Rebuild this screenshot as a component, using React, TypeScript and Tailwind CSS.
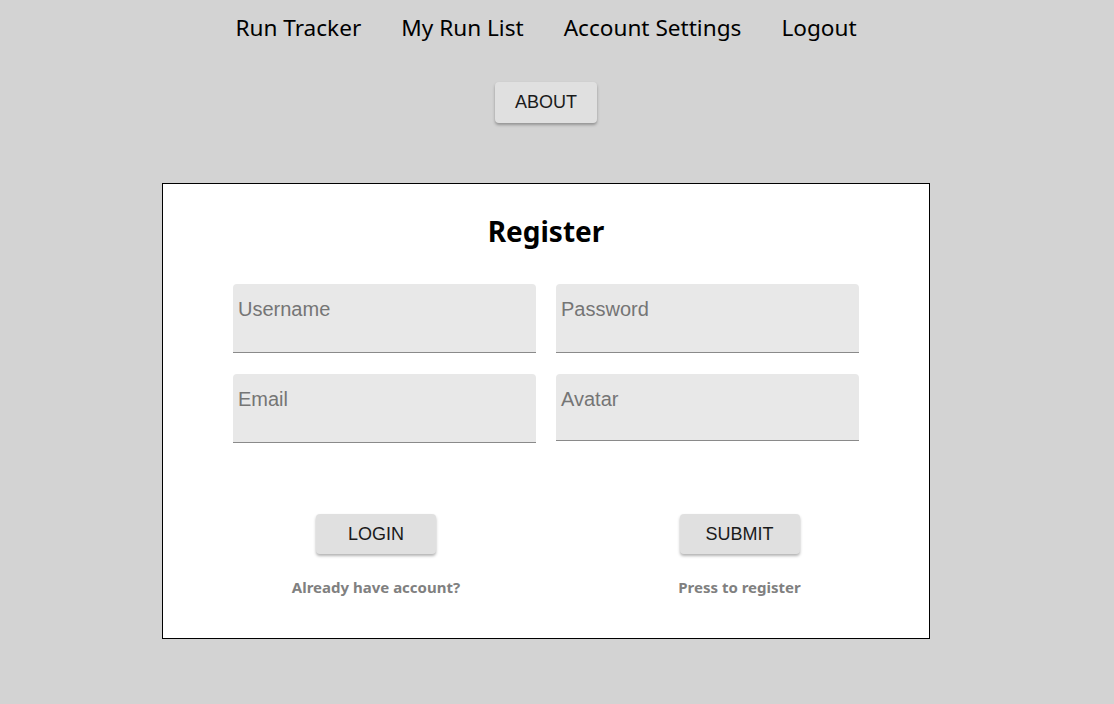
import React from "react";

const navFont = { fontFamily: '"Noto Sans", "Open Sans", sans-serif' };

function Field({ label, h = "h-[69px]" }: { label: string; h?: string }) {
  return (
    <div className={`w-[303px] ${h} bg-[#e8e8e8] rounded-t-[4px] border-b border-[#8a8a8a] pl-[5px] pt-[12px]`}>
      <span className="text-[20px] leading-[26px] text-[#757575] font-['Liberation_Sans',Arial,sans-serif]">{label}</span>
    </div>
  );
}

function Btn({ children, w }: { children: React.ReactNode; w: string }) {
  return (
    <button className={`${w} h-[40px] bg-[#e0e0e0] rounded-[4px] shadow-[0_2px_3px_rgba(0,0,0,0.3)] text-[18px] text-[#1a1a1a] font-['Liberation_Sans',Arial,sans-serif]`}>
      {children}
    </button>
  );
}

export default function App() {
  return (
    <div className="min-h-[704px] w-full bg-[#d3d3d3] flex flex-col items-center pr-[22px]">
      <nav className="flex gap-[40px] pt-[12px] h-[44px] items-center text-[22.6px] text-black leading-none" style={navFont}>
        <span>Run Tracker</span>
        <span>My Run List</span>
        <span>Account Settings</span>
        <span>Logout</span>
      </nav>
      <div className="mt-[38px]">
        <Btn w="w-[102px] h-[41px]">ABOUT</Btn>
      </div>
      <div className="mt-[60px] w-[768px] h-[456px] bg-white border border-black flex flex-col">
        <h1 className="text-center text-[28px] font-bold mt-[29px] leading-[36px]" style={navFont}>Register</h1>
        <div className="mt-[35px] ml-[70px] grid grid-cols-[303px_303px] gap-x-[20px] gap-y-[21px]">
          <Field label="Username" />
          <Field label="Password" />
          <Field label="Email" />
          <Field label="Avatar" h="h-[67px]" />
        </div>
        <div className="mt-[71px] ml-[129px] flex gap-[219px]">
          <div className="w-[168px] flex flex-col items-center">
            <Btn w="w-[120px]">LOGIN</Btn>
            <div className="mt-[23px] text-[15px] font-bold text-[#808080] leading-[20px] whitespace-nowrap" style={navFont}>Already have account?</div>
          </div>
          <div className="w-[121px] flex flex-col items-center">
            <Btn w="w-[120px]">SUBMIT</Btn>
            <div className="mt-[23px] text-[15px] font-bold text-[#808080] leading-[20px] whitespace-nowrap" style={navFont}>Press to register</div>
          </div>
        </div>
      </div>
    </div>
  );
}
